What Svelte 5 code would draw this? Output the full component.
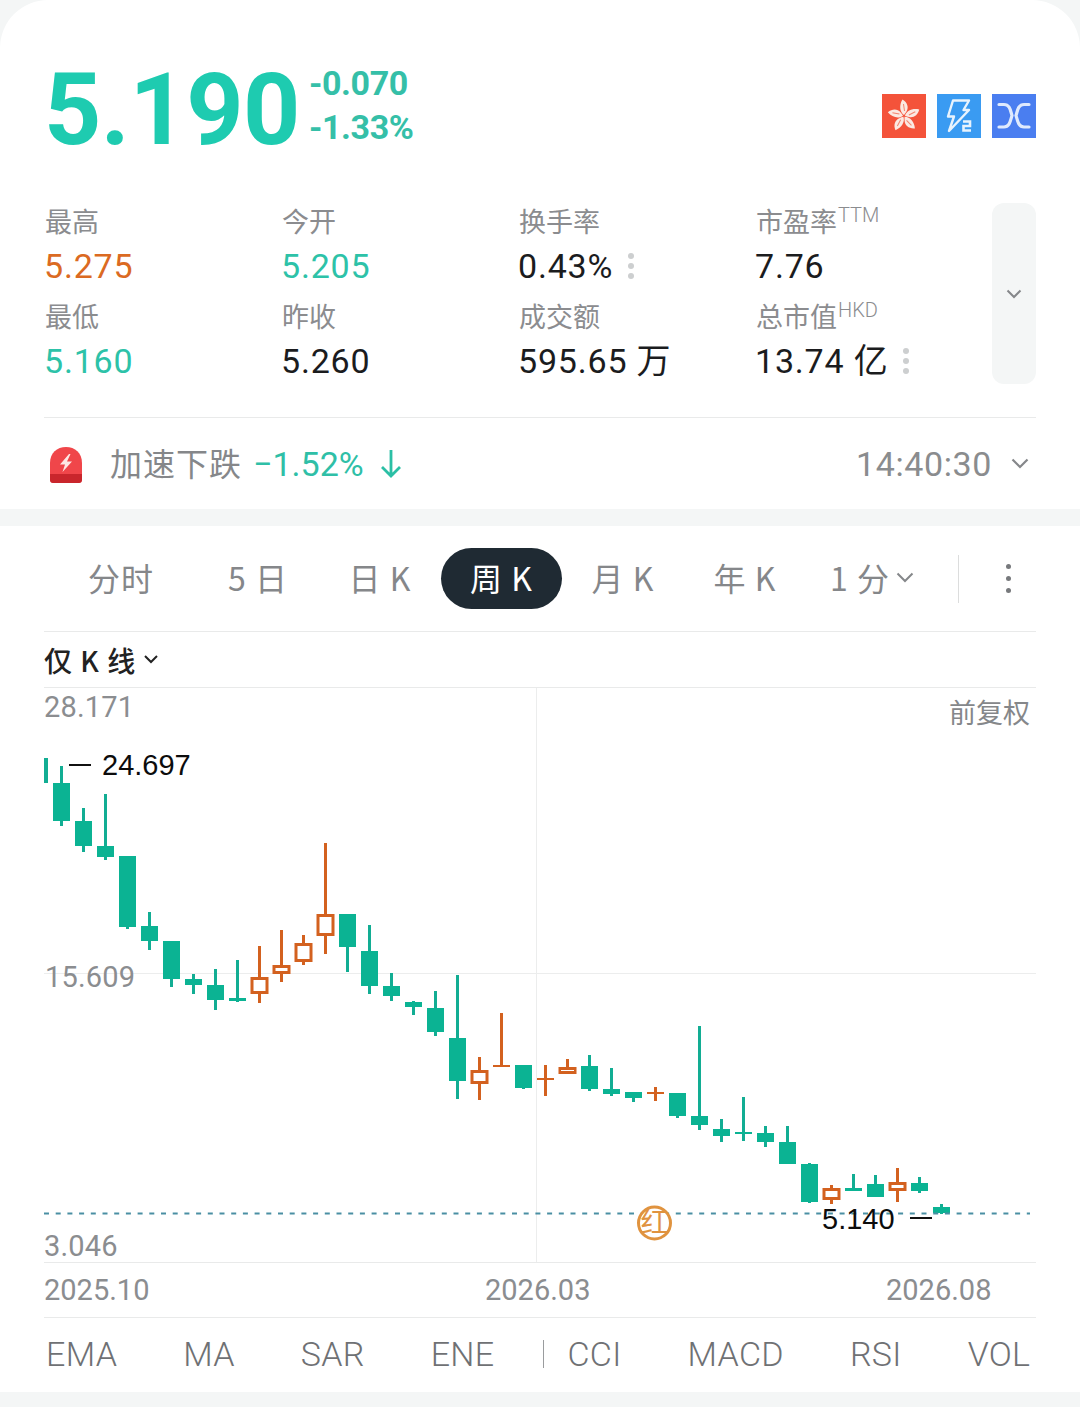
<script>
	// x, wick top, wick bottom, body top, body bottom, up?
	const candles = [
		[61, 766, 826, 783, 821, 0], [83, 808, 852, 821, 846, 0], [105, 794, 860, 846, 857, 0],
		[127, 856, 929, 856, 927, 0], [149, 912, 950, 926, 941, 0], [171, 941, 987, 941, 979, 0],
		[193, 974, 994, 979, 985, 0], [215, 969, 1010, 985, 1000, 0], [237, 960, 1002, 998, 1001, 0],
		[259, 946, 1003, 977, 994, 1], [281, 930, 982, 965, 974, 1], [303, 935, 965, 943, 962, 1],
		[325, 843, 954, 914, 936, 1], [347, 914, 972, 914, 947, 0], [369, 925, 994, 951, 986, 0],
		[391, 973, 1001, 986, 996, 0], [413, 1001, 1015, 1002, 1007, 0], [435, 991, 1036, 1008, 1032, 0],
		[457, 975, 1099, 1038, 1081, 0], [479, 1057, 1100, 1070, 1084, 1], [501, 1013, 1067, 1065, 1067, 1],
		[523, 1065, 1089, 1065, 1088, 0], [545, 1065, 1096, 1078, 1080, 1], [567, 1059, 1074, 1067, 1074, 1],
		[589, 1055, 1091, 1066, 1089, 0], [611, 1068, 1096, 1089, 1094, 0], [633, 1092, 1102, 1092, 1098, 0],
		[655, 1087, 1101, 1092, 1094, 1], [677, 1093, 1118, 1093, 1116, 0], [699, 1026, 1130, 1116, 1125, 0],
		[721, 1119, 1142, 1129, 1136, 0], [743, 1097, 1141, 1132, 1134, 0], [765, 1126, 1147, 1133, 1142, 0],
		[787, 1126, 1164, 1142, 1164, 0], [809, 1163, 1203, 1164, 1202, 0], [831, 1185, 1204, 1188, 1200, 1],
		[853, 1174, 1191, 1188, 1191, 0], [875, 1175, 1197, 1184, 1197, 0], [897, 1168, 1202, 1182, 1191, 1],
		[919, 1177, 1193, 1183, 1191, 0], [941, 1204, 1214, 1207, 1213, 0]
	];

	const stats = [
		{ label: "最高", value: "5.275", tone: "up" },
		{ label: "今开", value: "5.205", tone: "down" },
		{ label: "换手率", value: "0.43%", dots: true },
		{ label: "市盈率", sup: "TTM", value: "7.76" },
		{ label: "最低", value: "5.160", tone: "down" },
		{ label: "昨收", value: "5.260" },
		{ label: "成交额", value: "595.65 万" },
		{ label: "总市值", sup: "HKD", value: "13.74 亿", dots: true }
	];

	const tabs = ["分时", "5 日", "日 K", "周 K", "月 K", "年 K"];
	const indicators = ["EMA", "MA", "SAR", "ENE", "|", "CCI", "MACD", "RSI", "VOL"];
	const petals = [0, 72, 144, 216, 288];
</script>

<div class="page">
	<section class="quote">
		<div class="head">
			<div class="price">5.190</div>
			<div class="change">
				<span>-0.070</span>
				<span>-1.33%</span>
			</div>
			<div class="badges">
				<svg width="44" height="44" viewBox="0 0 44 44">
					<rect width="44" height="44" fill="#f4533a" />
					{#each petals as a}
						<g transform="rotate({a} 22 22)">
							<path
								d="M22 21C17.500 18 17 11 20.500 5.500C25.500 8.500 27 13.500 24.500 17.500C23.800 18.800 23 20 22 21Z"
								fill="#fbe9e2"
							/>
							<path d="M21.500 10L22.500 17" stroke="#f4836d" stroke-width="1" />
						</g>
					{/each}
				</svg>
				<svg width="44" height="44" viewBox="0 0 44 44">
					<rect width="44" height="44" fill="#3a9bf2" />
					<path
						d="M16 6.500H32L26.500 16H32L12 37L17 22.500H11Z"
						fill="none"
						stroke="#e8f3fd"
						stroke-width="2.400"
						stroke-linejoin="round"
					/>
					<path
						d="M26 27.500H33V32H26.500V36.500H34"
						fill="none"
						stroke="#e8f3fd"
						stroke-width="2.600"
					/>
				</svg>
				<svg width="44" height="44" viewBox="0 0 44 44">
					<rect width="44" height="44" fill="#4a7ef0" />
					<path
						d="M7 10.500H12C18 10.500 18.500 17 20 21.500C18.500 26 18 33 12 33H7M37 10.500H32C26 10.500 25.500 17 24 21.500C25.500 26 26 33 32 33H37"
						fill="none"
						stroke="#dfeafd"
						stroke-width="3.200"
						stroke-linecap="round"
					/>
				</svg>
			</div>
		</div>

		<div class="stats-row">
			<div class="stats">
				{#each stats as s}
					<div class="stat">
						<div class="label">{s.label}{#if s.sup}<sup>{s.sup}</sup>{/if}</div>
						<div class="value {s.tone || ''}">
							{s.value}{#if s.dots}<i class="dots"><b></b><b></b><b></b></i>{/if}
						</div>
					</div>
				{/each}
			</div>
			<div class="expand">
				<svg width="16" height="10" viewBox="0 0 16 10">
					<path d="M1.500 1.500L8 8L14.500 1.500" fill="none" stroke="#85878a" stroke-width="2" />
				</svg>
			</div>
		</div>

		<div class="alert">
			<svg class="alert-icon" width="34" height="38" viewBox="0 0 34 38">
				<path d="M1 17C1 7 8 1 17 1C26 1 33 7 33 17V33C33 36 32 37 29 37H5C2 37 1 36 1 33Z" fill="#f0464a" />
				<path d="M1 28H33V33C33 36 32 37 29 37H5C2 37 1 36 1 33Z" fill="#c9262c" />
				<path d="M20 8L11 18.500H16L13.500 26L23 15.500H18L21.500 8Z" fill="#fde8e4" />
			</svg>
			<span class="alert-name">加速下跌</span>
			<span class="alert-pct">−1.52%</span>
			<svg class="alert-arrow" width="22" height="30" viewBox="0 0 22 30">
				<path d="M11 1V27M2 18L11 27L20 18" fill="none" stroke="#2bbfa5" stroke-width="2.800" />
			</svg>
			<span class="alert-time">14:40:30</span>
			<svg width="18" height="11" viewBox="0 0 18 11">
				<path d="M1.500 1.500L9 9L16.500 1.500" fill="none" stroke="#85878a" stroke-width="2.200" />
			</svg>
		</div>
	</section>

	<section class="chart-card">
		<div class="tabs">
			{#each tabs as t, i}
				<div class="tab" class:first={i === 0} class:active={t === "周 K"}>{t}</div>
			{/each}
			<div class="tab interval">
				1 分
				<svg width="18" height="11" viewBox="0 0 18 11">
					<path d="M1.500 1.500L9 9L16.500 1.500" fill="none" stroke="#85878a" stroke-width="2" />
				</svg>
			</div>
			<div class="tab-divider"></div>
			<div class="more"><b></b><b></b><b></b></div>
		</div>

		<div class="mode">
			仅 K 线
			<svg width="14" height="9" viewBox="0 0 14 9">
				<path d="M1 1L7 7L13 1" fill="none" stroke="#222" stroke-width="2" />
			</svg>
		</div>

		<svg class="chart" width="1080" height="574" viewBox="0 688 1080 574">
			<line x1="536.500" y1="688" x2="536.500" y2="1262" stroke="#eceded" />
			<line x1="44" y1="973.500" x2="1036" y2="973.500" stroke="#eceded" />

			<text x="44" y="717" class="axis">28.171</text>
			<text x="45" y="987" class="axis">15.609</text>
			<text x="44" y="1256" class="axis">3.046</text>
			<text x="1030" y="723" class="adj" text-anchor="end">前复权</text>

			<rect x="44" y="758" width="4" height="25" fill="#12ad93" />
			{#each candles as [x, wt, wb, bt, bb, up]}
				<line x1={x + 0.5} y1={wt} x2={x + 0.5} y2={up ? bt : wb} stroke={up ? "#d3611f" : "#12ad93"} stroke-width="3" />
				{#if up}
					<line x1={x + 0.5} y1={bb} x2={x + 0.5} y2={wb} stroke="#d3611f" stroke-width="3" />
					{#if bb - bt > 3}
						<rect x={x - 7} y={bt + 1.5} width="15" height={bb - bt - 3} fill="#fff" stroke="#d3611f" stroke-width="3" />
					{:else}
						<rect x={x - 8} y={bt} width="17" height={bb - bt} fill="#d3611f" />
					{/if}
				{:else}
					<rect x={x - 8} y={bt} width="17" height={bb - bt} fill="#0bb393" />
				{/if}
			{/each}

			<line x1="44" y1="1213.500" x2="1030" y2="1213.500" stroke="#4a8fa3" stroke-width="2" stroke-dasharray="5 6.700" />

			<line x1="69" y1="765" x2="91" y2="765" stroke="#111" stroke-width="2" />
			<text x="102" y="775" class="mark">24.697</text>
			<text x="822" y="1229" class="mark">5.140</text>
			<line x1="910" y1="1218" x2="932" y2="1218" stroke="#111" stroke-width="2" />

			<circle cx="654.500" cy="1223" r="16" fill="#fff" stroke="#e0933f" stroke-width="3" />
			<text x="654.500" y="1233" class="hong" text-anchor="middle">红</text>
		</svg>

		<div class="dates">
			<span>2025.10</span>
			<span>2026.03</span>
			<span>2026.08</span>
		</div>

		<div class="indicators">
			{#each indicators as n}
				{#if n === "|"}
					<i class="ind-divider"></i>
				{:else}
					<span class:after-divider={n === "CCI"}>{n}</span>
				{/if}
			{/each}
		</div>
	</section>
</div>

<style>
	:global(body) {
		background: #f4f6f6;
	}
	.page {
		width: 1080px;
		height: 1407px;
		overflow: hidden;
		background: #f4f6f6;
		font-family: Roboto, "Noto Sans CJK SC", sans-serif;
		color: #111;
	}
	.quote {
		height: 509px;
		box-sizing: border-box;
		padding: 0 44px;
		background: #fff;
		border-radius: 48px 48px 0 0;
	}
	.head {
		display: flex;
		align-items: center;
		height: 203px;
		padding-top: 29px;
		box-sizing: border-box;
	}
	.price {
		font-size: 100px;
		font-weight: 700;
		line-height: 1;
		color: #1ecbb0;
		margin: 0 0 12px 0;
		letter-spacing: -0.5px;
	}
	.change {
		display: flex;
		flex-direction: column;
		gap: 5px;
		margin: 0 0 21px 9px;
		font-size: 34px;
		font-weight: 700;
		line-height: 39px;
		color: #35bfa8;
		letter-spacing: -0.4px;
	}
	.badges {
		display: flex;
		gap: 11px;
		margin-left: auto;
	}
	.badges svg {
		display: block;
	}
	.stats-row {
		display: flex;
		height: 214px;
		border-bottom: 1px solid #e9eaea;
	}
	.stats {
		display: grid;
		grid-template-columns: repeat(4, 237px);
		grid-auto-rows: 95px;
	}
	.label {
		margin-left: 1px;
		font-family: "Noto Sans CJK SC", sans-serif;
		font-size: 27px;
		line-height: 36px;
		color: #8b8c8f;
	}
	.label sup {
		margin-left: 1px;
		font-family: Roboto, sans-serif;
		font-size: 20px;
		line-height: 0;
		vertical-align: 10px;
		font-weight: 300;
	}
	.value {
		display: flex;
		align-items: center;
		height: 48px;
		margin-top: 3px;
		font-size: 34px;
		line-height: 48px;
		letter-spacing: 0.8px;
		white-space: pre;
		color: #1b1c1e;
	}
	.value.up {
		color: #db6a22;
	}
	.value.down {
		color: #2dc2a8;
	}
	.dots {
		display: flex;
		flex-direction: column;
		gap: 4px;
		margin-left: 15px;
	}
	.dots b {
		width: 6px;
		height: 6px;
		border-radius: 50%;
		background: #cdcfd0;
	}
	.expand {
		display: flex;
		align-items: center;
		justify-content: center;
		width: 44px;
		height: 181px;
		background: #f4f6f6;
		border-radius: 12px;
	}
	.alert {
		display: flex;
		align-items: center;
		height: 91px;
	}
	.alert-icon {
		margin: 2px 0 0 5px;
	}
	.alert-name {
		margin: -4px 0 0 27px;
		font-family: "Noto Sans CJK SC", sans-serif;
		font-size: 32px;
		letter-spacing: 1px;
		color: #85878a;
	}
	.alert-pct {
		margin-left: 11px;
		font-size: 34px;
		color: #2fbfa7;
	}
	.alert-arrow {
		margin-left: 16px;
	}
	.alert-time {
		margin-left: auto;
		margin-right: 19px;
		font-size: 34px;
		letter-spacing: 0.6px;
		color: #8a8c8e;
	}
	.alert > svg:last-child {
		margin-right: 7px;
	}
	.chart-card {
		margin-top: 17px;
		height: 866px;
		background: #fff;
	}
	.tabs {
		display: flex;
		align-items: center;
		height: 105px;
		margin: 0 44px;
		padding-left: 14px;
		border-bottom: 1px solid #e9eaea;
		font-family: "Noto Sans CJK SC", sans-serif;
		font-size: 32px;
		color: #85878a;
	}
	.tab {
		display: flex;
		align-items: center;
		justify-content: center;
		box-sizing: border-box;
		width: 122px;
		height: 61px;
		padding-bottom: 3px;
		letter-spacing: 1px;
		flex: none;
	}
	.tab.first {
		width: 122px;
		padding-left: 4px;
		margin-right: 17px;
	}
	.tab.active {
		width: 121px;
		border-radius: 31px;
		background: #1f2a33;
		color: #fff;
	}
	.tab.interval {
		width: 132px;
		gap: 6px;
	}
	.tab-divider {
		width: 1px;
		height: 48px;
		margin-left: 20px;
		background: #dcdddd;
	}
	.more {
		display: flex;
		flex-direction: column;
		gap: 7px;
		margin-left: 47px;
	}
	.more b {
		width: 5px;
		height: 5px;
		border-radius: 50%;
		background: #77797c;
	}
	.mode {
		display: flex;
		align-items: center;
		gap: 8px;
		height: 55px;
		margin: 0 44px;
		border-bottom: 1px solid #e9eaea;
		font-family: "Noto Sans CJK SC", sans-serif;
		font-size: 28px;
		font-weight: 500;
		letter-spacing: 1px;
		color: #222;
	}
	.chart {
		display: block;
	}
	.axis {
		font-family: Roboto, sans-serif;
		font-size: 29px;
		letter-spacing: 0.2px;
		fill: #8b8d90;
	}
	.adj {
		font-family: "Noto Sans CJK SC", sans-serif;
		font-size: 27px;
		fill: #85878a;
	}
	.mark {
		font-family: "Liberation Sans", sans-serif;
		font-size: 29px;
		fill: #0c0c0c;
	}
	.hong {
		font-family: "Noto Sans CJK SC", sans-serif;
		font-size: 28px;
		fill: #e0933f;
	}
	.dates {
		display: grid;
		grid-template-columns: 441px 401px auto;
		align-items: center;
		height: 54px;
		margin: 0 44px;
		border-top: 1px solid #e9eaea;
		border-bottom: 1px solid #e9eaea;
		font-size: 29px;
		color: #8b8d90;
	}
	.indicators {
		display: flex;
		align-items: center;
		height: 74px;
		padding: 0 0 2px 46px;
		box-sizing: border-box;
		font-size: 34px;
		font-weight: 300;
		letter-spacing: 0.3px;
		color: #6f7174;
	}
	.indicators span {
		flex: none;
		margin-right: 66px;
	}
	.indicators span.after-divider {
		margin-left: 23px;
	}
	.ind-divider {
		flex: none;
		width: 1px;
		height: 28px;
		margin-left: -17px;
		background: #9a9c9e;
	}
</style>
